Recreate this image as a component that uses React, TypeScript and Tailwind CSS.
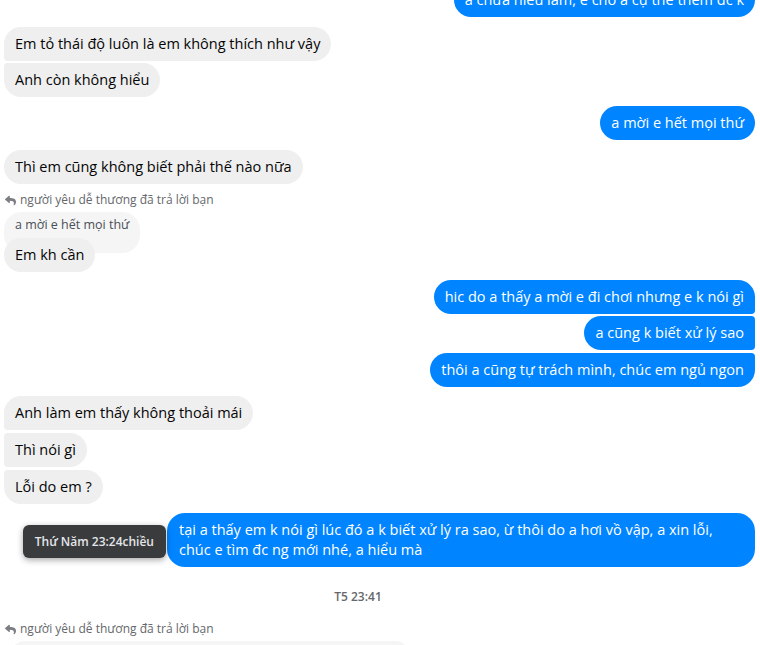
import { FaReply } from "react-icons/fa";
import type { ReactNode } from "react";

const FONT = { fontFamily: '"Open Sans", "Liberation Sans", sans-serif' };

type Pos = "first" | "mid" | "last" | "single";

const inRadius: Record<Pos, string> = {
  first: "rounded-[18px] rounded-bl-[4px]",
  mid: "rounded-[18px] rounded-tl-[4px] rounded-bl-[4px]",
  last: "rounded-[18px] rounded-tl-[4px]",
  single: "rounded-[18px]",
};

const outRadius: Record<Pos, string> = {
  first: "rounded-[18px] rounded-br-[4px]",
  mid: "rounded-[18px] rounded-tr-[4px] rounded-br-[4px]",
  last: "rounded-[18px] rounded-tr-[4px]",
  single: "rounded-[18px]",
};

const Incoming = ({ children, pos = "single", className = "" }: { children: ReactNode; pos?: Pos; className?: string }) => (
  <div className={`flex justify-start pl-[4px] ${className}`}>
    <div className={`bg-[#efefef] text-[#050505] text-[14.5px] leading-[20px] px-[11px] py-[7px] ${inRadius[pos]}`}>
      {children}
    </div>
  </div>
);

const Outgoing = ({ children, pos = "single", className = "" }: { children: ReactNode; pos?: Pos; className?: string }) => (
  <div className={`flex justify-end pr-[5px] ${className}`}>
    <div className={`bg-[#0084ff] text-white text-[14.5px] leading-[20px] px-[11px] py-[7px] ${outRadius[pos]}`}>
      {children}
    </div>
  </div>
);

const ReplyLabel = ({ className = "" }: { className?: string }) => (
  <div className={`flex items-center gap-[4px] pl-[5px] text-[12px] leading-[14px] text-[#65676b] ${className}`}>
    <FaReply className="w-[11px] h-[11px] text-[#7a7d81]" />
    <span>người yêu dễ thương đã trả lời bạn</span>
  </div>
);

export default function App() {
  return (
    <div className="w-[760px] h-[645px] overflow-hidden bg-white" style={FONT}>
      <div className="-mt-[17px]">
        <Outgoing pos="last">a chưa hiểu lắm, e cho a cụ thể thêm đc k</Outgoing>

        <Incoming pos="first" className="mt-[10px]">Em tỏ thái độ luôn là em không thích như vậy</Incoming>
        <Incoming pos="last" className="mt-[2px]">Anh còn không hiểu</Incoming>

        <Outgoing className="mt-[9px]">a mời e hết mọi thứ</Outgoing>

        <Incoming className="mt-[10px]">Thì em cũng không biết phải thế nào nữa</Incoming>

        <ReplyLabel className="mt-[9px]" />
        <div className="flex pl-[4px] mt-[5px]">
          <div className="bg-[#f5f5f5] text-[#4b4f56] text-[12.5px] leading-[16px] rounded-[18px] px-[11px] pt-[5px] pb-[20px]">
            a mời e hết mọi thứ
          </div>
        </div>
        <Incoming className="-mt-[15px] relative">Em kh cần</Incoming>

        <Outgoing pos="first" className="mt-[8px]">hic do a thấy a mời e đi chơi nhưng e k nói gì</Outgoing>
        <Outgoing pos="mid" className="mt-[2px]">a cũng k biết xử lý sao</Outgoing>
        <Outgoing pos="last" className="mt-[3px]">thôi a cũng tự trách mình, chúc em ngủ ngon</Outgoing>

        <Incoming pos="first" className="mt-[9px]">Anh làm em thấy không thoải mái</Incoming>
        <Incoming pos="mid" className="mt-[3px]">Thì nói gì</Incoming>
        <Incoming pos="last" className="mt-[3px]">Lỗi do em ?</Incoming>

        <div className="flex justify-end pr-[5px] mt-[9px]">
          <div className="relative w-[588px] bg-[#0084ff] text-white text-[14.5px] leading-[20px] px-[12px] py-[7px] rounded-[18px]">
            tại a thấy em k nói gì lúc đó a k biết xử lý ra sao, ừ thôi do a hơi vồ vập, a xin lỗi,
            <br />
            chúc e tìm đc ng mới nhé, a hiểu mà
            <div className="absolute right-full top-[12px] mr-[1px] bg-[#3a3b3c] text-[#e4e6eb] text-[12px] font-semibold leading-[17px] rounded-[6px] px-[12px] py-[8px] whitespace-nowrap shadow-[0_2px_6px_rgba(0,0,0,0.35)]">
              Thứ Năm 23:24chiều
            </div>
          </div>
        </div>

        <div className="mt-[22px] pr-[44px] text-center text-[12px] font-semibold leading-[16px] text-[#65676b]">T5 23:41</div>

        <ReplyLabel className="mt-[17px]" />
        <div className="flex pl-[10px] mt-[5px]">
          <div className="w-[400px] h-[30px] bg-[#f5f5f5] rounded-[18px]" />
        </div>
      </div>
    </div>
  );
}
